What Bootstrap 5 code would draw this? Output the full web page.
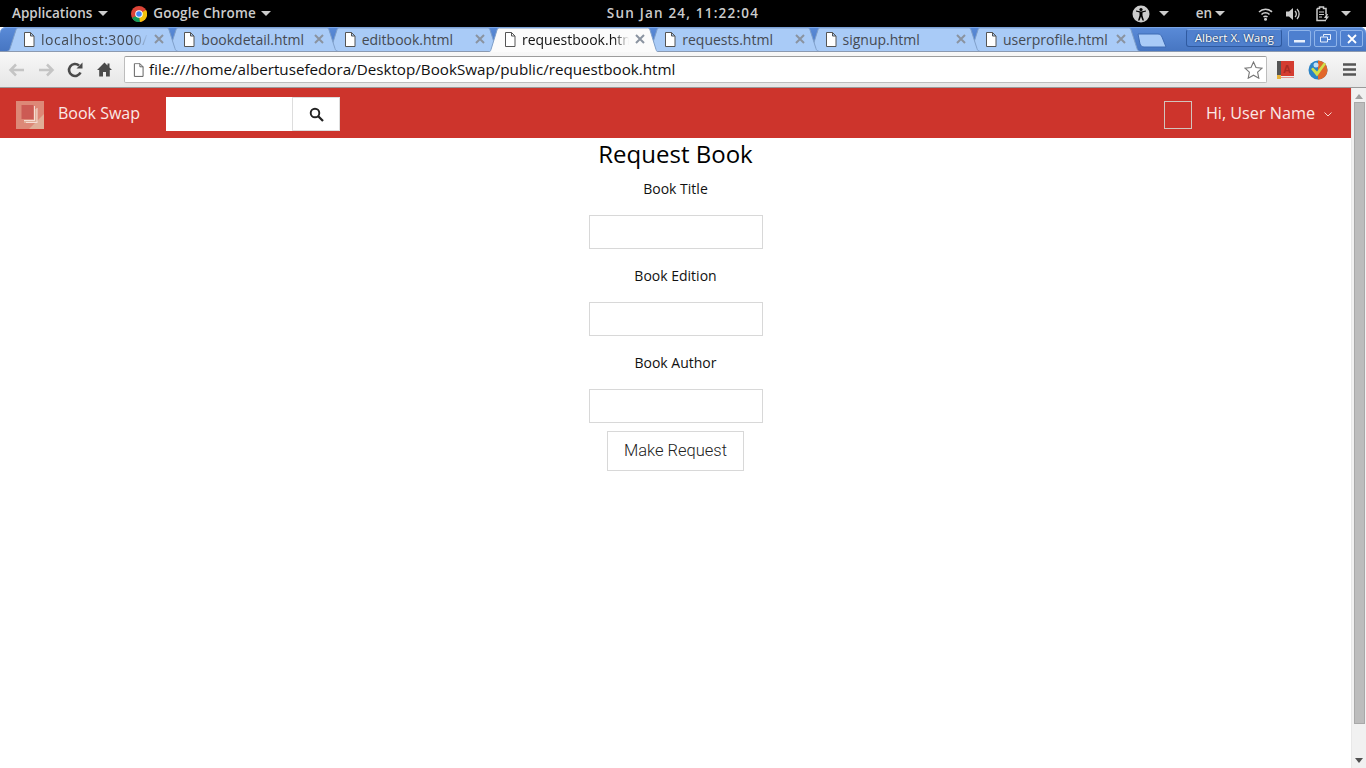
<!DOCTYPE html>
<html lang="en">
<head>
<meta charset="utf-8">
<title>Request Book</title>
<link rel="stylesheet" href="https://cdn.jsdelivr.net/npm/bootstrap@5.3.0/dist/css/bootstrap.min.css">
<style>
html,body{height:768px;overflow:hidden}
body{font-family:"Open Sans",sans-serif;background:#fff;color:#000}
.screen-wrap{height:768px}
.gnome-bar{height:27px;background:#000;color:#ccc;font-size:13.5px;font-weight:600;flex:none}
.gnome-side{flex:1 1 0;min-width:0}
.clock-txt{letter-spacing:1.2px}
.caret-down{width:0;height:0;border-left:5px solid transparent;border-right:5px solid transparent;border-top:5px solid #ccc;display:inline-block}
.tab-strip{height:25px;flex:none;background:linear-gradient(#5a8bd8,#4776c2);border-radius:6px 6px 0 0;padding-left:7px;box-shadow:inset 0 1px 0 #7aa5e6;border-bottom:1px solid #8c9ab0}
.tabx{position:relative;width:171px;height:24px;margin-right:-10.7px;flex:none;font-size:14px;color:#454a52}
.tabx:nth-child(1){z-index:7}.tabx:nth-child(2){z-index:6}.tabx:nth-child(3){z-index:5}.tabx:nth-child(5){z-index:4}.tabx:nth-child(6){z-index:3}.tabx:nth-child(7){z-index:2}
.tabx.on{z-index:8;color:#111;height:25px}
.tab-shape{position:absolute;left:0;top:0;width:171px;height:24px;fill:#a9cbf7;stroke:#7f9fc9}
.on .tab-shape{height:25px;fill:#fbfbfb}
.tab-doc{position:absolute;left:16px;top:5px;width:12px;height:15px}
.tab-title{position:absolute;left:34px;top:2px;line-height:21px;white-space:nowrap;width:max-content}
.tab-title.fade-end{-webkit-mask-image:linear-gradient(90deg,#000 92px,transparent 107px);mask-image:linear-gradient(90deg,#000 92px,transparent 107px)}
.wide-digits{letter-spacing:.5px}
.tab-x{position:absolute;left:147px;top:7px;width:10px;height:10px}
.new-tab{width:30px;height:15px;margin-left:8px;margin-top:6px;flex:none}
.profile-chip{width:96px;height:18px;margin-top:2px;margin-left:19px;border:1px solid #2f5aa0;border-top-color:#7ea6e0;border-radius:3px;background:#4f80ce;color:#fff;font-size:11.6px;font-weight:500;line-height:16px;text-shadow:0 0 2px #123;flex:none}
.win-btn{width:23px;height:17px;margin-top:3px;margin-left:3px;border:1px solid #8fb4ea;border-radius:2px;background:#4d7fcf;flex:none}
.toolbar-row{height:36px;flex:none;background:linear-gradient(#f8f8f8,#e6e6e6);border-bottom:1px solid #9a9a9a;padding-left:8px}
.url-box{width:1143px;height:27px;margin-left:12px;background:#fff;border:1px solid #bdbdbd;border-top-color:#9d9d9d;border-radius:2px;font-size:15.2px;font-weight:500;color:#111;flex:none}
.app-main{min-height:0}
.page-col{min-width:0}
.red-nav{height:50px;flex:none;background:#cd342c;padding:0 19px 0 16px;color:#fff;font-size:16px}
.brand-mark{margin-top:4px;flex:none}
.nav-brandtxt{font-size:16px;font-weight:400;color:#fbe9e7;margin-left:14px;width:108px;padding:0}
.search-wrap{width:174px;height:34px;flex:none;margin-top:2px}
.search-wrap .form-control{border:0;border-radius:0;height:34px;padding:0}
.search-wrap .btn{width:48px;flex:none;height:34px;background:#fff;border:1px solid #ddd;border-radius:0;padding:0;display:flex;align-items:center;justify-content:center}
.avatar-box{width:28px;height:28px;border:1px solid #d2c4bd;flex:none;margin-top:4px}
.user-txt{font-size:16.2px;color:#fbe9e7;margin-left:14px}
.form-col{width:174px}
.form-head{font-size:24px;font-weight:400;line-height:31px;margin:0;white-space:nowrap;color:#000}
.form-lab{font-size:14px;line-height:20px;color:#111;margin:10px 0 0;white-space:nowrap}
.form-lab.next-lab{margin-top:17px}
.form-col .form-control{height:34px;width:174px;margin-top:16px;border:1px solid #d8d8d8;border-radius:0}
.go-btn{width:137px;height:40px;margin-top:8px;border:1px solid #d8d8d8;border-radius:0;background:#fff;color:#222;font-family:Roboto,"Liberation Sans",sans-serif;font-weight:300;font-size:16.5px;padding:0}
.scroll-col{width:15px;flex:none;background:#f1f1f1;border-left:1px solid #e8e8e8}
.scroll-thumb{width:11px;height:622px;background:#bcbcbc;border:1px solid #a8a8a8;margin:3px auto 0}
.sc-arrow{width:0;height:0;border-left:4px solid transparent;border-right:4px solid transparent;margin:6px auto 0}
.sc-up{border-bottom:5px solid #a0a0a0}
.sc-down{border-top:5px solid #505050;margin-top:34px}
</style>
</head>
<body>
<svg width="0" height="0" class="d-block" aria-hidden="true">
<defs>
<symbol id="doc" viewBox="0 0 12 15"><path d="M1.500.5h6l3.500 3.500v10.500h-9.500z M7.500.5v3.500h3.500" fill="#fff" stroke="#555" stroke-width="1"/></symbol>
<symbol id="cross" viewBox="0 0 10 10"><path d="M1 1l8 8M9 1l-8 8" stroke="#8a93a0" stroke-width="2"/></symbol>
<symbol id="tabform" viewBox="0 0 171 25" preserveAspectRatio="none"><path d="M.5 25c1.500 0 2-1 2.500-2.500L9 3c.4-1.300 1-2 2.500-2h148c1.500 0 2 .7 2.500 2l6 19.500c.5 1.500 1 2.500 2.500 2.500"/></symbol>
</defs>
</svg>
<div class="screen-wrap d-flex flex-column">

<div class="gnome-bar d-flex align-items-center">
  <div class="gnome-side d-flex align-items-center">
    <span class="ms-2 ps-1">Applications</span><span class="caret-down" style="margin-left:6px"></span>
    <svg style="margin-left:23px" width="16" height="16" viewBox="0 0 16 16"><circle cx="8" cy="8" r="8" fill="#db4437"/><path d="M8 8L1 12a8 8 0 0 0 8 4z" fill="#0f9d58"/><path d="M8 8l1 8a8 8 0 0 0 6-12z" fill="#f4c20d"/><path d="M1 4.500L5 11 8 8z" fill="#db4437"/><circle cx="8" cy="8" r="3.800" fill="#fff"/><circle cx="8" cy="8" r="2.800" fill="#4285f4"/></svg>
    <span style="margin-left:6px;letter-spacing:.15px">Google Chrome</span><span class="caret-down" style="margin-left:5px"></span>
  </div>
  <div class="clock-txt">Sun Jan 24, 11:22:04</div>
  <div class="gnome-side d-flex align-items-center justify-content-end">
    <svg width="18" height="18" viewBox="0 0 18 18"><circle cx="9" cy="9" r="8.500" fill="#ccc"/><circle cx="9" cy="4.500" r="1.600" fill="#000"/><path d="M4 6.500l3.500 1v3l-1.500 5h1.500l1.500-4 1.500 4H12l-1.500-5v-3l3.500-1v-1l-5 1-5-1z" fill="#000"/></svg>
    <span class="caret-down" style="margin-left:9px"></span>
    <span style="margin-left:27px">en</span><span class="caret-down" style="margin-left:3px"></span>
    <svg style="margin-left:33px" width="15" height="14" viewBox="0 0 15 14"><path d="M1 5a9 9 0 0 1 13 0M3.500 7.500a5.500 5.500 0 0 1 8 0M5.500 10a2.800 2.800 0 0 1 4 0" fill="none" stroke="#ccc" stroke-width="1.500"/><circle cx="7.500" cy="12.300" r="1.500" fill="#ccc"/></svg>
    <svg style="margin-left:13px" width="15" height="14" viewBox="0 0 15 14"><path d="M0 4.500h3l4-3.500v12l-4-3.500h-3z" fill="#ccc"/><path d="M9 4a4 4 0 0 1 0 6M11 2a7 7 0 0 1 0 10" fill="none" stroke="#ccc" stroke-width="1.300"/></svg>
    <svg style="margin-left:15px" width="14" height="16" viewBox="0 0 14 16"><path d="M1 2.500h2.500v-1.500h4v1.500h2.500v6M10 14.500h-9v-12" fill="none" stroke="#ccc" stroke-width="1.500"/><path d="M3 6h5M3 8.500h5M3 11h3" stroke="#ccc" stroke-width="1.200"/><path d="M10.500 8l-2.500 4h2l-1 3.500 4-5h-2l1-2.500z" fill="#ccc"/></svg>
    <span class="caret-down" style="margin-left:11px;margin-right:15px"></span>
  </div>
</div>

<div class="tab-strip d-flex">
  <div class="tabx"><svg class="tab-shape"><use href="#tabform"/></svg><svg class="tab-doc"><use href="#doc"/></svg><span class="tab-title fade-end wide-digits">localhost:3000/</span><svg class="tab-x"><use href="#cross"/></svg></div>
  <div class="tabx"><svg class="tab-shape"><use href="#tabform"/></svg><svg class="tab-doc"><use href="#doc"/></svg><span class="tab-title">bookdetail.html</span><svg class="tab-x"><use href="#cross"/></svg></div>
  <div class="tabx"><svg class="tab-shape"><use href="#tabform"/></svg><svg class="tab-doc"><use href="#doc"/></svg><span class="tab-title">editbook.html</span><svg class="tab-x"><use href="#cross"/></svg></div>
  <div class="tabx on"><svg class="tab-shape"><use href="#tabform"/></svg><svg class="tab-doc"><use href="#doc"/></svg><span class="tab-title fade-end">requestbook.html</span><svg class="tab-x"><use href="#cross"/></svg></div>
  <div class="tabx"><svg class="tab-shape"><use href="#tabform"/></svg><svg class="tab-doc"><use href="#doc"/></svg><span class="tab-title">requests.html</span><svg class="tab-x"><use href="#cross"/></svg></div>
  <div class="tabx"><svg class="tab-shape"><use href="#tabform"/></svg><svg class="tab-doc"><use href="#doc"/></svg><span class="tab-title">signup.html</span><svg class="tab-x"><use href="#cross"/></svg></div>
  <div class="tabx"><svg class="tab-shape"><use href="#tabform"/></svg><svg class="tab-doc"><use href="#doc"/></svg><span class="tab-title">userprofile.html</span><svg class="tab-x"><use href="#cross"/></svg></div>
  <svg class="new-tab" viewBox="0 0 30 15"><path d="M1 1h20c2 0 3 1 4 3l4 10H7c-2 0-3-1-4-3z" fill="#a9cbf7" stroke="#3f6cb5"/></svg>
  <div class="profile-chip text-center">Albert X. Wang</div>
  <div class="win-btn d-flex align-items-center justify-content-center" style="margin-left:6px"><svg width="11" height="8" viewBox="0 0 11 8"><rect y="5" width="11" height="2.500" fill="#e8f0fc"/></svg></div>
  <div class="win-btn d-flex align-items-center justify-content-center"><svg width="11" height="9" viewBox="0 0 11 9"><path d="M3.500 2.500v-2h7v5h-3M.5 3h7v5h-7z" fill="none" stroke="#e8f0fc"/></svg></div>
  <div class="win-btn d-flex align-items-center justify-content-center"><svg width="10" height="10" viewBox="0 0 10 10"><path d="M1 1l8 8M9 1l-8 8" stroke="#fff" stroke-width="1.800"/></svg></div>
</div>

<div class="toolbar-row d-flex align-items-center">
  <svg width="18" height="14" viewBox="0 0 18 14"><path d="M8 1.500L2.500 7 8 12.500M3 7h13" fill="none" stroke="#c4c4c4" stroke-width="2.500"/></svg>
  <svg style="margin-left:11px" width="18" height="14" viewBox="0 0 18 14"><path d="M10 1.500L15.500 7 10 12.500M15 7H2" fill="none" stroke="#c4c4c4" stroke-width="2.500"/></svg>
  <svg style="margin-left:12px" width="16" height="16" viewBox="0 0 16 16"><path d="M13.500 10.500A6 6 0 1 1 12 3.500" fill="none" stroke="#4a4a4a" stroke-width="2.600"/><path d="M9.500 6.500H15.500V.5z" fill="#4a4a4a"/></svg>
  <svg style="margin-left:14px" width="15" height="15" viewBox="0 0 15 15"><path d="M7.500.5L0 8h2.200v6.500h3.800v-4.500h3v4.500h3.800V8H15l-2.500-2.500V1.500h-2v2z" fill="#4a4a4a"/></svg>
  <div class="url-box d-flex align-items-center">
    <svg class="ms-2" width="11" height="14" viewBox="0 0 12 15"><use href="#doc"/></svg>
    <span style="margin-left:5px">file:///home/albertusefedora/Desktop/BookSwap/public/requestbook.html</span>
    <svg class="ms-auto" style="margin-right:3px" width="19" height="18" viewBox="0 0 19 18"><path d="M9.500 1l2.500 5.500 6 .7-4.400 4 1.200 6-5.300-3-5.300 3 1.200-6L1 7.200l6-.7z" fill="#fff" stroke="#777" stroke-width="1.100"/></svg>
  </div>
  <svg style="margin-left:10px" width="17" height="18" viewBox="0 0 17 18"><rect width="17" height="17" fill="#d43c30"/><rect width="4" height="17" fill="#555"/><rect y="15" x="4" width="13" height="1.500" fill="#eee"/><rect y="14" width="4" height="4" fill="#e8b33a"/><text x="6" y="12" font-family="Liberation Sans,sans-serif" font-weight="700" font-size="11" fill="#a92b23">A</text></svg>
  <svg style="margin-left:14px" width="20" height="20" viewBox="0 0 20 20"><circle cx="10" cy="10" r="9.500" fill="#2b83c6"/><path d="M10 .5a9.500 9.500 0 0 1 9.500 9.500c0 5-4 9.500-9.500 9.500z" fill="#e2672a"/><path d="M3 9l2-1.500 4 4 7-9 2 1.500-9 12.500z" fill="#cfe04a"/><circle cx="8" cy="5" r="2.500" fill="#bfe0f6"/></svg>
  <svg style="margin-left:15px" width="13" height="13" viewBox="0 0 13 13"><path d="M0 1.500h13M0 6.500h13M0 11.500h13" stroke="#555" stroke-width="2.600"/></svg>
</div>

<div class="app-main d-flex flex-grow-1">
  <div class="page-col flex-grow-1 d-flex flex-column">
    <nav class="red-nav d-flex align-items-center">
      <svg class="brand-mark" width="28" height="28" viewBox="0 0 28 28"><rect width="28" height="28" fill="#dd8877"/><path d="M13 28L28 13v15z" fill="#e0ae97"/><path d="M18 8h3v14H8v-3h10z" fill="#e0ae97"/><rect x="5.500" y="4" width="12" height="14" fill="#cc5a54"/><path d="M18 5h1v15H8v-1h10z" fill="#f7dcd4"/><path d="M20.500 7h1v15H10v-1h10.500z" fill="#f7dcd4"/></svg>
      <span class="nav-brandtxt">Book Swap</span>
      <div class="search-wrap d-flex">
        <input class="form-control" type="text" aria-label="Search">
        <button class="btn" type="button" aria-label="Search"><svg width="15" height="15" viewBox="0 0 15 15"><circle cx="6" cy="6" r="4.300" fill="none" stroke="#222" stroke-width="1.900"/><path d="M9 9l5 5" stroke="#222" stroke-width="2.300"/></svg></button>
      </div>
      <div class="avatar-box ms-auto"></div>
      <span class="user-txt">Hi, User Name</span>
      <svg width="8" height="5" viewBox="0 0 8 5" style="margin-top:3px;margin-left:9px"><path d="M.5.5L4 4 7.500.5" fill="none" stroke="#f5d5cc" stroke-width="1"/></svg>
    </nav>
    <main class="d-flex justify-content-center">
      <form class="form-col d-flex flex-column align-items-center text-center">
        <h1 class="form-head">Request Book</h1>
        <label class="form-lab" for="ft">Book Title</label>
        <input class="form-control" id="ft" type="text">
        <label class="form-lab next-lab" for="fe">Book Edition</label>
        <input class="form-control" id="fe" type="text">
        <label class="form-lab next-lab" for="fa">Book Author</label>
        <input class="form-control" id="fa" type="text">
        <button class="btn go-btn" type="button">Make Request</button>
      </form>
    </main>
  </div>
  <div class="scroll-col d-flex flex-column">
    <div class="sc-arrow sc-up"></div>
    <div class="scroll-thumb"></div>
    <div class="sc-arrow sc-down"></div>
  </div>
</div>

</div>
<script src="https://cdn.jsdelivr.net/npm/bootstrap@5.3.0/dist/js/bootstrap.bundle.min.js"></script>
</body>
</html>
